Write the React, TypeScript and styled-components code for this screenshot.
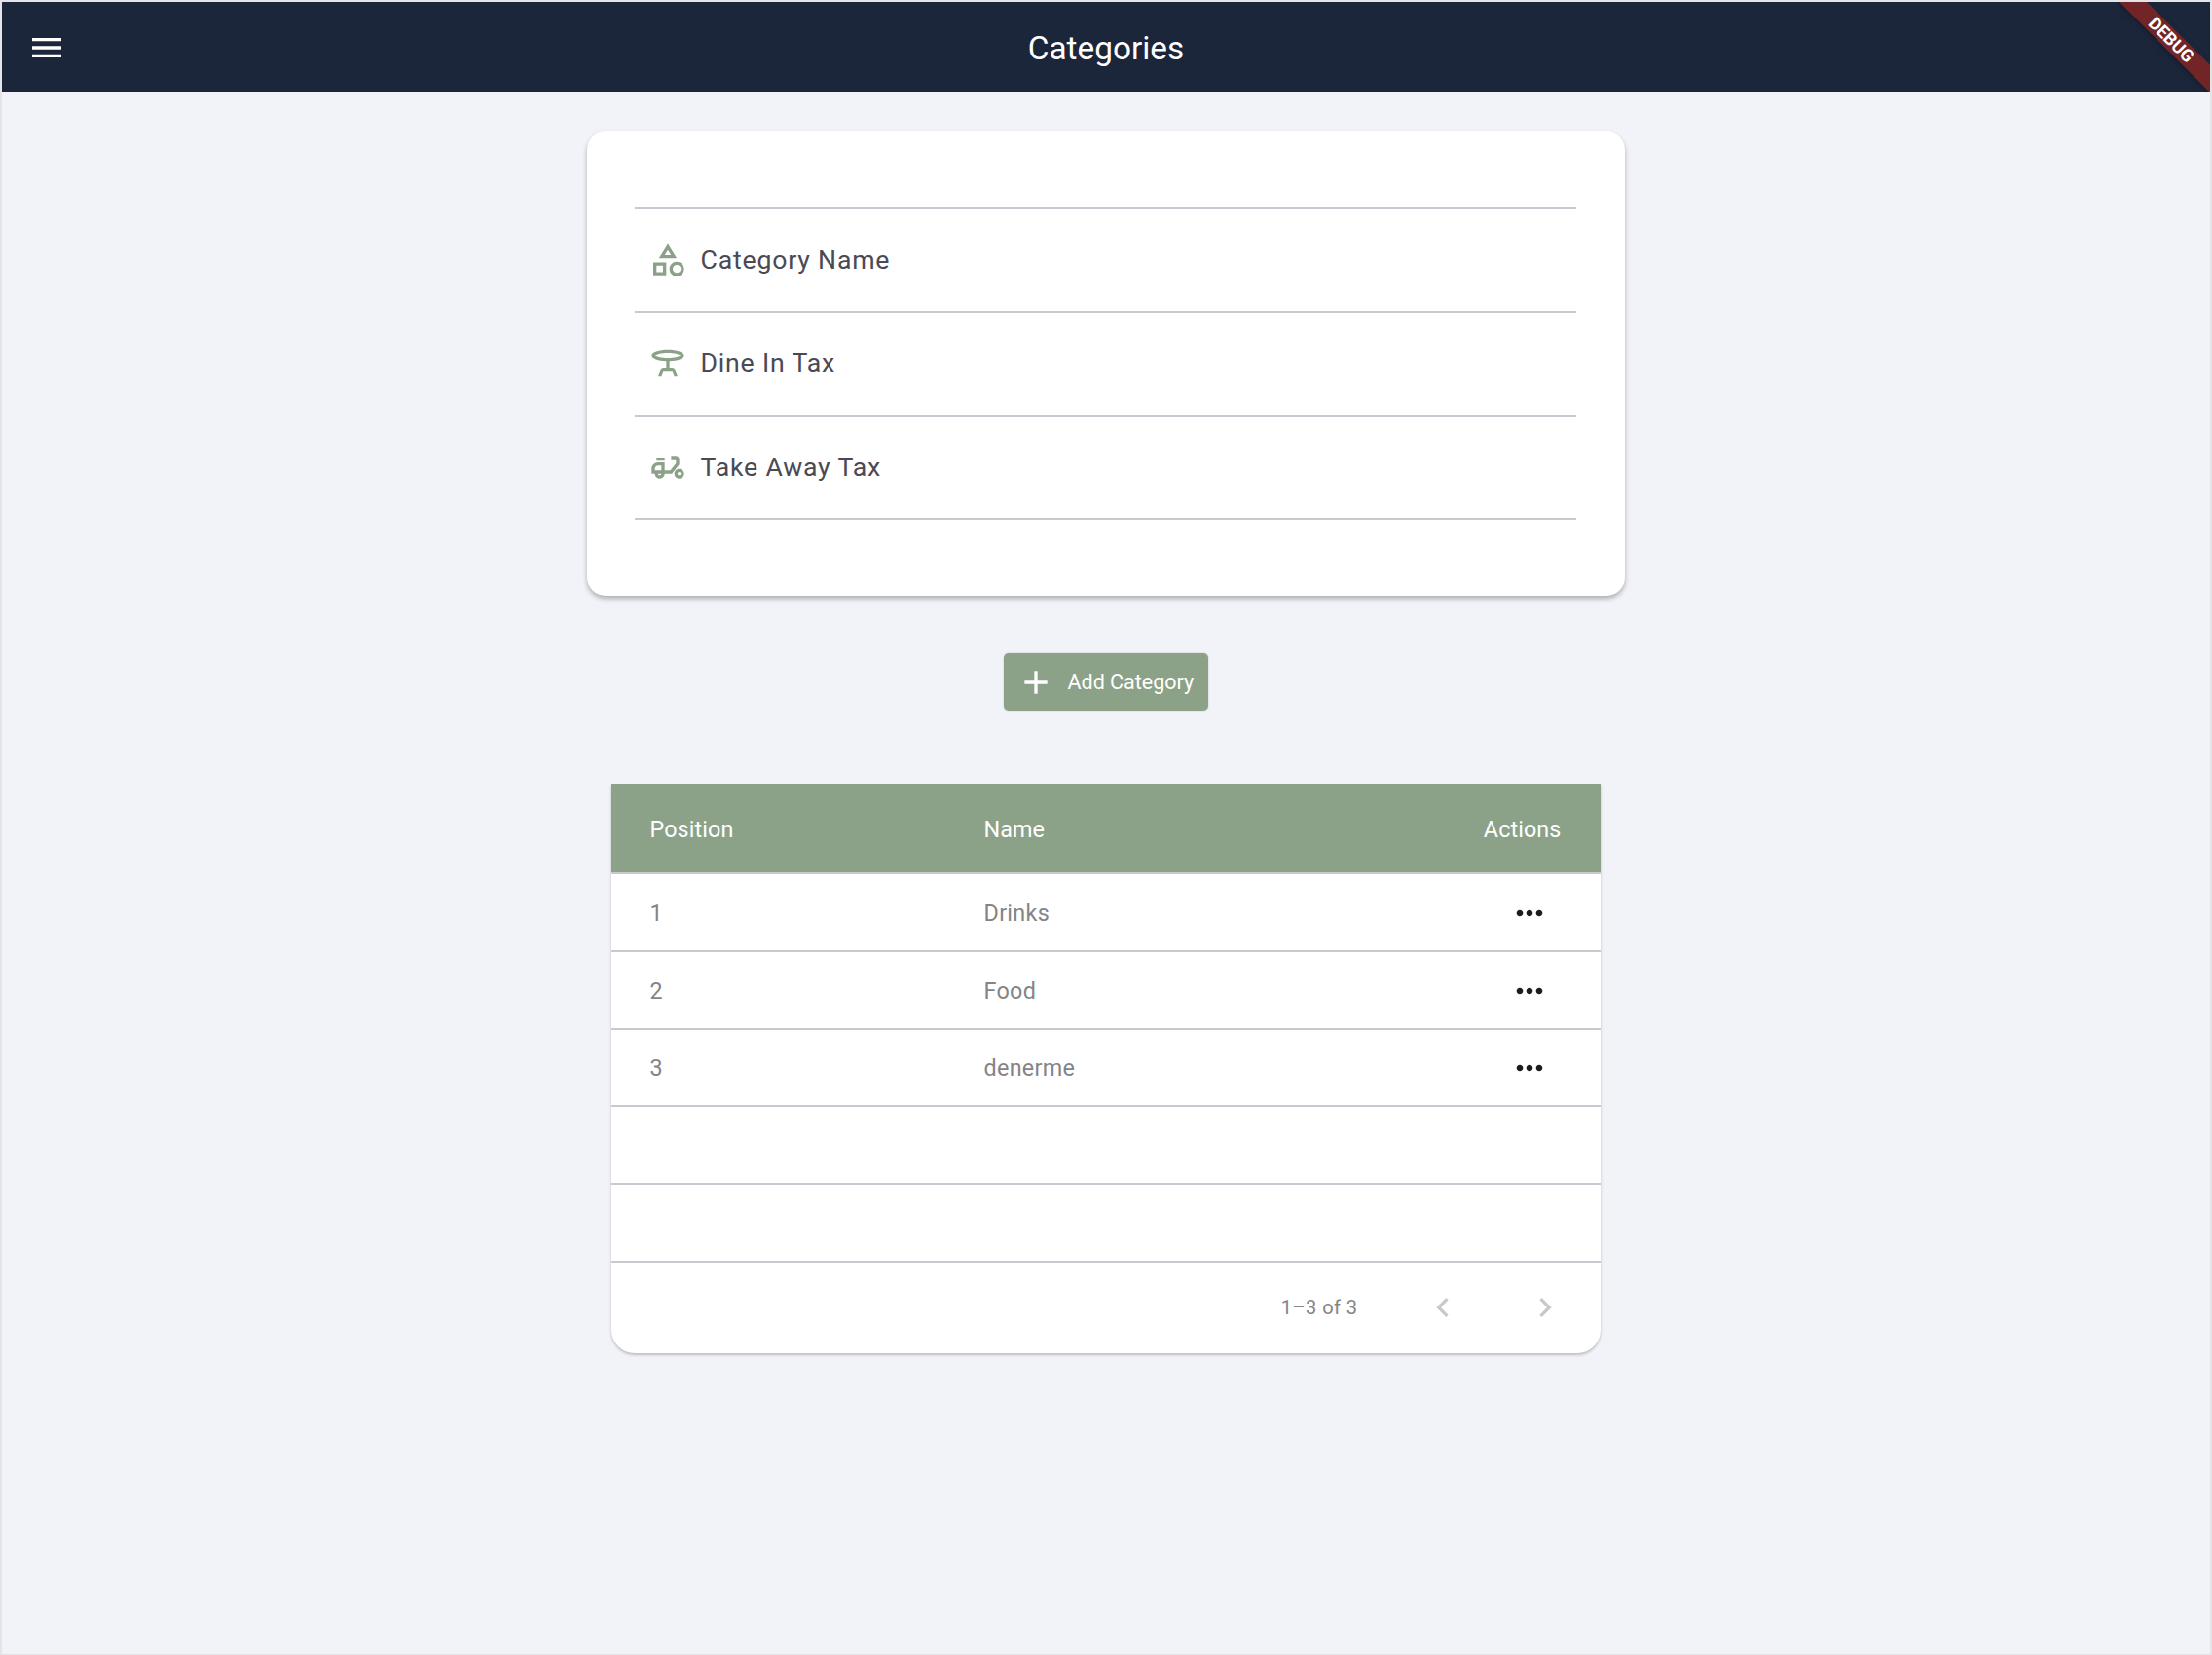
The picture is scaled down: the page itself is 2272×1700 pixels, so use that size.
import React from "react";
import styled, { createGlobalStyle } from "styled-components";
import {
  MdAdd,
  MdChevronLeft,
  MdChevronRight,
  MdMenu,
  MdMoreHoriz,
  MdOutlineCategory,
  MdOutlineMoped,
  MdOutlineTableBar,
} from "react-icons/md";

const Global = createGlobalStyle`
  html, body { margin: 0; padding: 0; background: #f1f3f8; }
  body { font-family: Roboto, "Liberation Sans", sans-serif; }
`;

const Page = styled.div`
  position: relative;
  width: 2272px;
  height: 1700px;
  box-sizing: border-box;
  border: 2px solid #e3e4e8;
  border-bottom-width: 1px;
  background: #f1f3f8;
  overflow: hidden;
  display: flex;
  flex-direction: column;
`;

const AppBar = styled.header`
  height: 93px;
  flex: none;
  background: #1c263b;
  color: #fff;
  display: flex;
  align-items: center;
  justify-content: center;
  position: relative;
`;

const MenuButton = styled.div`
  position: absolute;
  left: 26px;
  top: 27px;
  width: 40px;
  height: 40px;
  font-size: 40px;
  line-height: 0;
  color: #fff;
`;

const Title = styled.h1`
  margin: 0;
  padding-top: 2px;
  font-size: 33.33px;
  line-height: 1;
  font-weight: 400;
`;

const Ribbon = styled.div`
  position: absolute;
  top: 0;
  right: 0;
  width: 95px;
  height: 93px;
  overflow: hidden;
  pointer-events: none;
`;

const RibbonBand = styled.div`
  position: absolute;
  top: 29px;
  left: -25px;
  width: 160px;
  height: 20px;
  background: #722526;
  color: #fff;
  font-size: 18px;
  font-weight: 700;
  line-height: 20px;
  text-align: center;
  transform: rotate(45deg);
  box-shadow: 0 2px 6px rgba(0, 0, 0, 0.25);
`;

const Main = styled.main`
  display: flex;
  flex-direction: column;
  align-items: center;
  padding-right: 1px;
`;

const FormCard = styled.section`
  margin-top: 40px;
  width: 1066px;
  height: 477px;
  box-sizing: border-box;
  padding: 78px 49.5px 0;
  background: #fff;
  border-radius: 19px;
  box-shadow: 0 3px 5px rgba(0, 0, 0, 0.28);
`;

const Field = styled.div`
  height: 106.3px;
  box-sizing: border-box;
  border-top: 2px solid #c9c8d0;
  display: flex;
  align-items: center;
  padding-left: 14px;
  gap: 13.5px;
  font-size: 40px;
  color: #8ba288;
  &:last-child { height: 2px; }
`;

const FieldLabel = styled.span`
  font-size: 26.67px;
  letter-spacing: 0.8px;
  color: #4a4a53;
`;

const AddButton = styled.button`
  margin-top: 59px;
  width: 210px;
  height: 59px;
  box-sizing: border-box;
  border: 0;
  border-radius: 5px;
  background: #8ba288;
  color: #fff;
  font-family: inherit;
  font-size: 21.5px;
  display: flex;
  align-items: center;
  padding: 0 0 0 13px;
  gap: 13px;
  box-shadow: 0 0 2px rgba(0, 0, 0, 0.2);
`;

const TableCard = styled.section`
  margin-top: 75px;
  width: 1016px;
  background: #fff;
  border-radius: 0 0 24px 24px;
  box-shadow: 0 2px 3px rgba(0, 0, 0, 0.22);
`;

const Columns = styled.div`
  display: grid;
  grid-template-columns: 343px 1fr auto;
  align-items: center;
  box-sizing: border-box;
  padding: 0 40px;
`;

const HeadRow = styled(Columns)`
  height: 93.4px;
  padding-top: 2px;
  background: #8ba288;
  color: #fff;
  font-size: 23.33px;
  letter-spacing: 0.1px;
  border-bottom: 2px solid #c9c8d0;
`;

const Row = styled(Columns)`
  height: 79.64px;
  padding-top: 2px;
  border-bottom: 2px solid #c9c8d0;
  color: #848488;
  font-size: 23.33px;
  letter-spacing: 0.32px;
`;

const ActionCell = styled.div`
  width: 79px;
  display: flex;
  justify-content: flex-end;
  height: 40px;
  font-size: 40px;
  line-height: 0;
  color: #1b1b20;
`;

const ActionIcon = styled.div`
  width: 40px;
  height: 40px;
  margin-right: 13px;
`;

const Footer = styled.div`
  height: 93.6px;
  display: flex;
  align-items: center;
  justify-content: flex-end;
  padding-right: 37px;
  color: #848488;
  font-size: 20px;
  letter-spacing: 0.45px;
`;

const PageText = styled.span`
  margin-right: 67px;
`;

const PagerIcon = styled.div<{ $gap?: number }>`
  width: 40px;
  height: 40px;
  font-size: 40px;
  line-height: 0;
  color: #c9c9cc;
  margin-left: ${(p) => p.$gap ?? 0}px;
`;

const rows = [
  ["1", "Drinks"],
  ["2", "Food"],
  ["3", "denerme"],
  ["", ""],
  ["", ""],
];

export default function App() {
  return (
    <Page>
      <Global />
      <AppBar>
        <MenuButton>
          <MdMenu />
        </MenuButton>
        <Title>Categories</Title>
        <Ribbon>
          <RibbonBand>DEBUG</RibbonBand>
        </Ribbon>
      </AppBar>
      <Main>
        <FormCard>
          <Field>
            <MdOutlineCategory />
            <FieldLabel>Category Name</FieldLabel>
          </Field>
          <Field>
            <MdOutlineTableBar />
            <FieldLabel>Dine In Tax</FieldLabel>
          </Field>
          <Field>
            <MdOutlineMoped />
            <FieldLabel>Take Away Tax</FieldLabel>
          </Field>
          <Field />
        </FormCard>
        <AddButton>
          <MdAdd size={40} />
          Add Category
        </AddButton>
        <TableCard>
          <HeadRow>
            <span>Position</span>
            <span>Name</span>
            <span>Actions</span>
          </HeadRow>
          {rows.map((r, i) => (
            <Row key={i}>
              <span>{r[0]}</span>
              <span>{r[1]}</span>
              <ActionCell>
                {r[0] && (
                  <ActionIcon>
                    <MdMoreHoriz />
                  </ActionIcon>
                )}
              </ActionCell>
            </Row>
          ))}
          <Footer>
            <PageText>1–3 of 3</PageText>
            <PagerIcon>
              <MdChevronLeft />
            </PagerIcon>
            <PagerIcon $gap={65}>
              <MdChevronRight />
            </PagerIcon>
          </Footer>
        </TableCard>
      </Main>
    </Page>
  );
}
